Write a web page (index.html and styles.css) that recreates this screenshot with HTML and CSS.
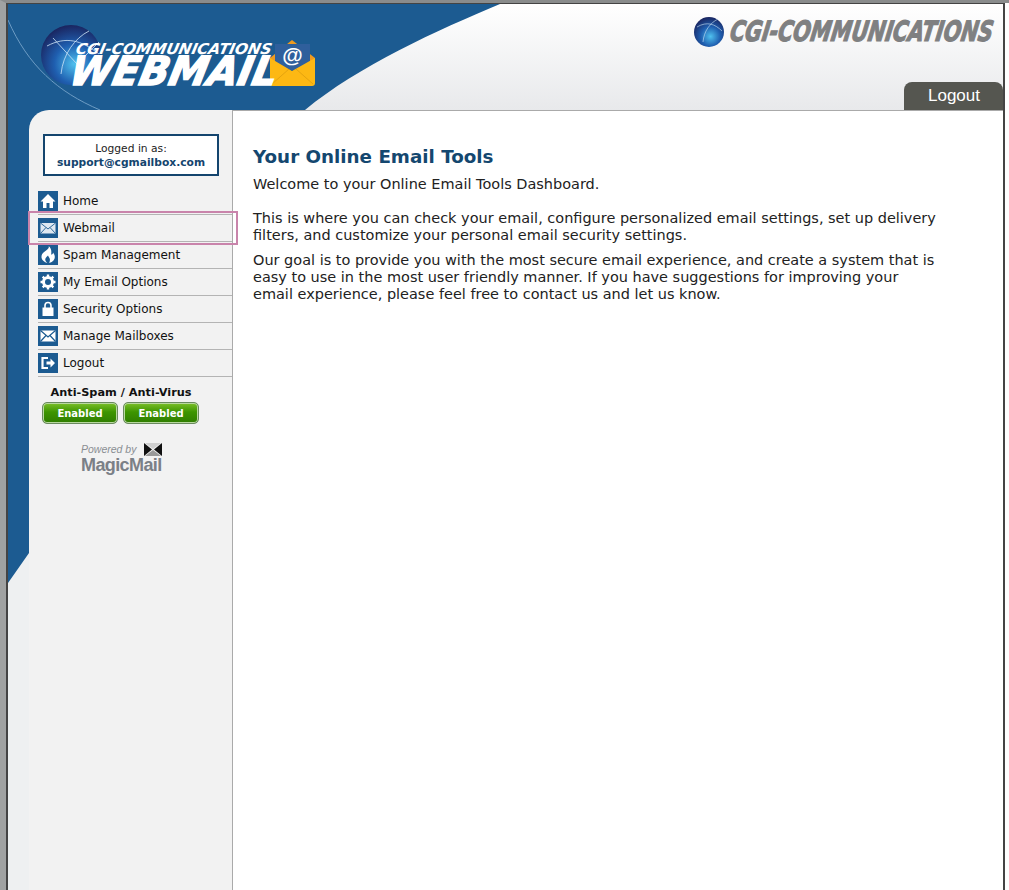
FILE: index.html
```html
<!DOCTYPE html>
<html lang="en">
<head>
    <meta charset="UTF-8">
    <title>Your Online Email Tools</title>
    <link rel="stylesheet" href="styles.css">
</head>
<body>
<div class="window">

    <!-- blue swoosh behind header and sidebar -->
    <svg class="swoosh" width="1000" height="600" viewBox="0 0 1000 600">
        <path d="M0 0H492C430 26 350 62 297 106H41V126H21V549L0 579Z" fill="#1c5b91"/>
        <path d="M0 16C20 62 50 88 92 106" fill="none" stroke="#6d9cc4" stroke-width="1"/>
    </svg>

    <header class="header">
        <svg class="logo-main" width="290" height="70" viewBox="0 0 290 70">
            <defs>
                <radialGradient id="globe" cx="0.55" cy="0.65" r="0.65">
                    <stop offset="0" stop-color="#4fc0ee"/>
                    <stop offset="0.5" stop-color="#1f5fb0"/>
                    <stop offset="1" stop-color="#1a2560"/>
                </radialGradient>
            </defs>
            <circle cx="30" cy="31" r="30" fill="url(#globe)"/>
            <path d="M6 22C25 12 40 16 58 30M20 50C22 30 34 14 48 7M12 14L36 40L58 18" fill="none" stroke="#cfe6f7" stroke-width=".8"/>
            <path d="M229 34L251 16L274 34V42H229Z" fill="#ef9a1f"/>
            <path d="M234 20H269V46H234Z" fill="#2f5f9c"/>
            <text class="at-sign" x="251.500" y="38" text-anchor="middle">@</text>
            <path d="M229 34L251 47L274 34V59Q274 62 271 62H232Q229 62 229 59Z" fill="#fdb813"/>
            <path d="M231 60L248 45M272 60L255 45" fill="none" stroke="#e5a30f"/>
            <text class="logo-small" transform="translate(34 30) scale(1.02 1) skewX(-12)">CGI-COMMUNICATIONS</text>
            <text class="logo-big" transform="translate(27 61) scale(.972 1) skewX(-12)">WEBMAIL</text>
        </svg>

        <svg class="logo-corner" width="302" height="34" viewBox="0 0 302 34">
            <circle cx="16" cy="17" r="15" fill="url(#globe)"/>
            <path d="M4 12C14 6 22 9 29 16M10 27C11 16 17 8 25 4" fill="none" stroke="#cfe6f7" stroke-width=".6"/>
            <text class="logo-grey" transform="translate(36 26) scale(.733 1) skewX(-12)">CGI-COMMUNICATIONS</text>
        </svg>

        <a class="logout-tab" href="#">Logout</a>
    </header>

    <div class="layout">
        <aside class="sidebar">
            <div class="logged-in">
                Logged in as:<br>
                <b>support@cgmailbox.com</b>
            </div>

            <ul class="menu">
                <li class="menu-item">
                    <svg class="menu-icon" viewBox="0 0 20 20"><path d="M10 3L2.500 10.500H5V17H8.500V12H11.500V17H15V10.500H17.500Z" fill="#fff"/></svg>
                    Home
                </li>
                <li class="menu-item">
                    <svg class="menu-icon" viewBox="0 0 20 20"><path d="M2.500 5H17.500V15.500H2.500Z" fill="#dfe8f1"/><path d="M2.500 5L10 11L17.500 5M2.500 15.500L8 9.500M17.500 15.500L12 9.500" fill="none" stroke="#1c5b91" stroke-width=".9"/></svg>
                    Webmail
                    <span class="highlight"></span>
                </li>
                <li class="menu-item">
                    <svg class="menu-icon" viewBox="0 0 20 20"><path transform="translate(-2.500 0) scale(1.250 1)" d="M10.500 1C11.500 4 8 5.500 6 8C4 10.500 4 16 9.500 18C6.500 15 8 12.500 10 10.500C10.500 12.500 12.500 13 11 18C16 16 16.500 11 14 7.500C14 9 13.500 9.500 12.500 9.500C13 6 12.500 3 10.500 1Z" fill="#fff"/></svg>
                    Spam Management
                </li>
                <li class="menu-item">
                    <svg class="menu-icon" viewBox="0 0 20 20"><circle cx="10" cy="10" r="4.500" fill="none" stroke="#fff" stroke-width="3"/><path d="M10 2.500V5M10 15V17.500M2.500 10H5M15 10H17.500M4.700 4.700L6.500 6.500M13.500 13.500L15.300 15.300M15.300 4.700L13.500 6.500M6.500 13.500L4.700 15.300" stroke="#fff" stroke-width="2.400"/></svg>
                    My Email Options
                </li>
                <li class="menu-item">
                    <svg class="menu-icon" viewBox="0 0 20 20"><path d="M4.500 8.500H15.500V17H4.500Z" fill="#fff"/><path d="M7 9V6.500A3 3 0 0 1 13 6.500V9" fill="none" stroke="#fff" stroke-width="1.600"/></svg>
                    Security Options
                </li>
                <li class="menu-item">
                    <svg class="menu-icon" viewBox="0 0 20 20"><path d="M2.500 4.500H17.500V15.500H2.500Z" fill="#fff"/><path d="M2.500 4.500L10 11L17.500 4.500M2.500 15.500L8 9.500M17.500 15.500L12 9.500" fill="none" stroke="#1c5b91" stroke-width="1.200"/></svg>
                    Manage Mailboxes
                </li>
                <li class="menu-item">
                    <svg class="menu-icon" viewBox="0 0 20 20"><path d="M10 5H4.500V15H10" fill="none" stroke="#fff" stroke-width="2.200"/><path d="M8.500 8.500H12.500V5.500L17 10L12.500 14.500V11.500H8.500Z" fill="#fff"/></svg>
                    Logout
                </li>
            </ul>

            <div class="status-title">Anti-Spam / Anti-Virus</div>
            <div class="status-row">
                <span class="status-btn">Enabled</span>
                <span class="status-btn">Enabled</span>
            </div>

            <div class="powered">
                <div class="powered-line">
                    <i>Powered by</i>
                    <svg width="18" height="13" viewBox="0 0 18 13"><path d="M0 0L8 6.500L0 13ZM18 0L10 6.500L18 13Z" fill="#111"/><path d="M1 0H17L9 6Z" fill="#d0d0d0"/><path d="M1 13H17L9 7Z" fill="#999"/></svg>
                </div>
                <div class="powered-name">MagicMail</div>
            </div>
        </aside>

        <main class="content">
            <h1>Your Online Email Tools</h1>
            <p class="intro">Welcome to your Online Email Tools Dashboard.</p>
            <p>This is where you can check your email, configure personalized email settings, set up delivery filters, and customize your personal email security settings.</p>
            <p>Our goal is to provide you with the most secure email experience, and create a system that is easy to use in the most user friendly manner. If you have suggestions for improving your email experience, please feel free to contact us and let us know.</p>
        </main>
    </div>
</div>
</body>
</html>
```

FILE: styles.css
```css
*{
    box-sizing: border-box;
}

html, body{
    margin: 0;
    height: 100%;
    overflow: hidden;
    background: #fff;
}

body{
    border-top: 3px solid #8a8c8c;
    border-left: 6px solid #a0a2a2;
    padding-right: 4px;
    font-family: "DejaVu Sans", sans-serif;
    color: #222;
}

.window{
    position: relative;
    height: 100%;
    border-top: 1px solid #444;
    border-left: 2px solid #444;
    border-right: 2px solid #444;
    background: linear-gradient(#fff, #e8e9eb) 0 0 / 100% 106px no-repeat, #eef0f1;
    overflow: hidden;
}

.swoosh{
    position: absolute;
    top: 0;
    left: 0;
}

.header{
    position: relative;
    height: 106px;
}

.logo-main{
    position: absolute;
    top: 20px;
    left: 33px;
}

.logo-small{
    font: italic bold 15px "DejaVu Sans", sans-serif;
    fill: #fff;
}

.logo-big{
    font: italic bold 40px "DejaVu Sans", sans-serif;
    fill: #fff;
    stroke: #fff;
    stroke-width: 1.5px;
}

.at-sign{
    font: bold 21px "Liberation Sans", sans-serif;
    fill: #fff;
}

.logo-corner{
    position: absolute;
    top: 11px;
    left: 685px;
}

.logo-grey{
    font: italic bold 28px "DejaVu Sans", sans-serif;
    fill: #7f8081;
    stroke: #7f8081;
    stroke-width: 1.200px;
}

.logout-tab{
    position: absolute;
    right: 0;
    bottom: 0;
    width: 99px;
    height: 28px;
    padding-left: 1px;
    border-radius: 8px 8px 0 0;
    background: #555650;
    color: #fff;
    font: 17px/27px "Liberation Sans", sans-serif;
    text-align: center;
    text-decoration: none;
}

.layout{
    position: relative;
    display: flex;
    height: calc(100% - 106px);
    padding-left: 21px;
}

.sidebar{
    width: 204px;
    flex: none;
    padding-top: 24px;
    background: #f2f2f2;
    border-right: 1px solid #aaa;
    border-radius: 20px 0 0 0;
}

.logged-in{
    width: 176px;
    height: 42px;
    margin: 0 0 12px 14px;
    padding-top: 6px;
    border: 2px solid #14456e;
    background: #fff;
    font-size: 10.700px;
    line-height: 14px;
    text-align: center;
}

.logged-in b{
    color: #14456e;
}

.menu{
    list-style: none;
    margin: 0 0 0 9px;
    padding: 0;
}

.menu-item{
    position: relative;
    display: flex;
    align-items: center;
    gap: 5px;
    height: 27px;
    border-bottom: 1px solid #b4b4b4;
    font-size: 12px;
    color: #111;
}

.menu-icon{
    width: 20px;
    height: 20px;
    background: #1c5b91;
}

.highlight{
    position: absolute;
    top: -4px;
    left: -10px;
    width: 210px;
    height: 34px;
    border: 2px solid #c984ab;
}

.status-title{
    margin: 9px 19px 0 0;
    font-size: 11.300px;
    font-weight: bold;
    line-height: 13px;
    color: #111;
    text-align: center;
}

.status-row{
    display: flex;
    gap: 5px;
    margin: 3px 0 0 13px;
}

.status-btn{
    width: 76px;
    height: 22px;
    border: 1px solid #6a8a5f;
    border-radius: 5px;
    background: linear-gradient(#7cc02a, #3d9500 45%, #2f7d00);
    box-shadow: inset 0 0 0 1px #b9d8a0;
    color: #fff;
    font-size: 10px;
    font-weight: bold;
    line-height: 21px;
    text-align: center;
}

.powered{
    width: 81px;
    margin: 19px 0 0 52px;
    color: #8a8e92;
    font-family: "Liberation Sans", sans-serif;
}

.powered-line{
    display: flex;
    justify-content: space-between;
    font-size: 10.500px;
    line-height: 13px;
}

.powered-name{
    margin-top: -1px;
    font-size: 18px;
    font-weight: bold;
    line-height: 20px;
    letter-spacing: -.6px;
    color: #7b8087;
}

.content{
    flex: 1;
    padding: 35px 62px 0 20px;
    background: #fff;
    border-top: 1px solid #aaa;
    font-size: 14.470px;
    line-height: 17px;
}

.content h1{
    margin: 0 0 8px;
    font-size: 18.300px;
    line-height: 22px;
    color: #14476f;
}

.content p{
    margin: 0 0 8px;
}

.content .intro{
    margin-bottom: 17px;
}
```
